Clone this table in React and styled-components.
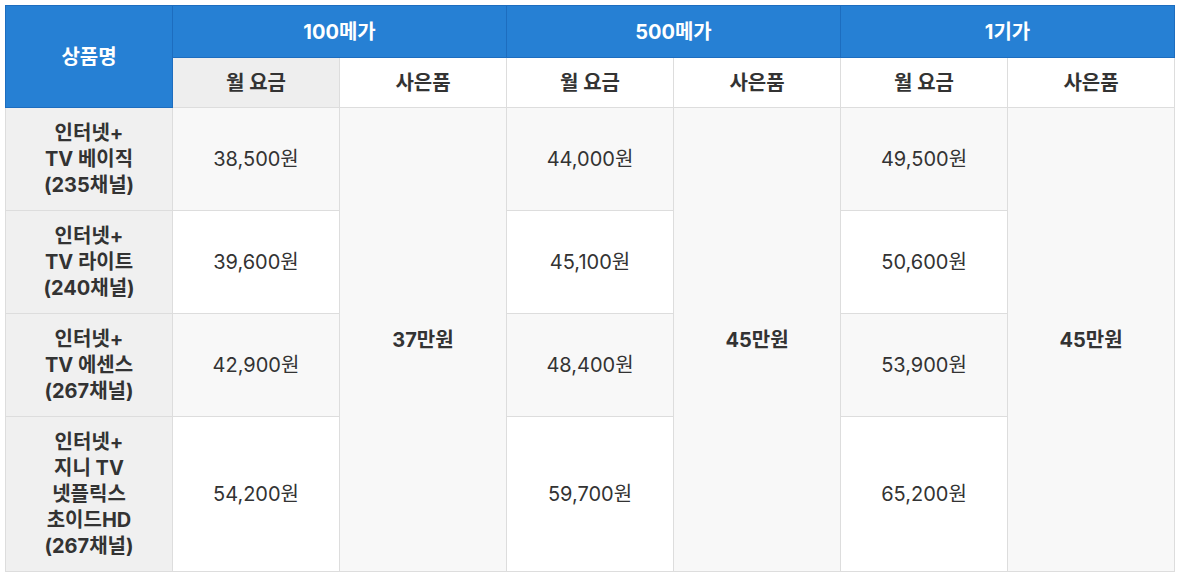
import React from "react";
import styled, { createGlobalStyle } from "styled-components";

const Global = createGlobalStyle`
  html, body { margin: 0; padding: 0; background: #fff; }
  body { font-family: Inter, "Noto Sans CJK KR", sans-serif; color: #333; }
`;

const Wrap = styled.div`
  padding: 5px;
`;

const Table = styled.table`
  width: 1170px;
  border-collapse: collapse;
  table-layout: fixed;
  font-size: 20px;
  line-height: 26px;
  text-align: center;
`;

const HeadCell = styled.th`
  background: #2680d4;
  color: #fff;
  font-weight: 700;
  border: 1px solid #1d6dbf;
  height: 51px;
  padding: 0;
`;

const SubHead = styled.th`
  background: ${(p) => (p.$gray ? "#eeeeee" : "#fff")};
  color: #333;
  font-weight: 700;
  border: 1px solid #dddddd;
  height: 49px;
  padding: 0;
`;

const NameCell = styled.td`
  background: #f0f0f0;
  font-weight: 700;
  border: 1px solid #dddddd;
  padding: 12px 4px;
  color: #333;
`;

const PriceCell = styled.td`
  background: ${(p) => (p.$alt ? "#f8f8f8" : "#fff")};
  border: 1px solid #dddddd;
  padding: 12px 4px;
  color: #333;
`;

const GiftCell = styled.td`
  background: #f8f8f8;
  border: 1px solid #dddddd;
  font-weight: 700;
  color: #333;
`;

const rows = [
  { name: ["인터넷+", "TV 베이직", "(235채널)"], p: ["38,500원", "44,000원", "49,500원"] },
  { name: ["인터넷+", "TV 라이트", "(240채널)"], p: ["39,600원", "45,100원", "50,600원"] },
  { name: ["인터넷+", "TV 에센스", "(267채널)"], p: ["42,900원", "48,400원", "53,900원"] },
  { name: ["인터넷+", "지니 TV", "넷플릭스", "초이드HD", "(267채널)"], p: ["54,200원", "59,700원", "65,200원"] },
];

const gifts = ["37만원", "45만원", "45만원"];

export default function App() {
  return (
    <Wrap>
      <Global />
      <Table>
        <colgroup>
          {Array.from({ length: 7 }).map((_, i) => (
            <col key={i} />
          ))}
        </colgroup>
        <thead>
          <tr>
            <HeadCell rowSpan={2}>상품명</HeadCell>
            <HeadCell colSpan={2}>100메가</HeadCell>
            <HeadCell colSpan={2}>500메가</HeadCell>
            <HeadCell colSpan={2}>1기가</HeadCell>
          </tr>
          <tr>
            <SubHead $gray>월 요금</SubHead>
            <SubHead>사은품</SubHead>
            <SubHead>월 요금</SubHead>
            <SubHead>사은품</SubHead>
            <SubHead>월 요금</SubHead>
            <SubHead>사은품</SubHead>
          </tr>
        </thead>
        <tbody>
          {rows.map((r, i) => (
            <tr key={i}>
              <NameCell>
                {r.name.map((l, j) => (
                  <div key={j}>{l}</div>
                ))}
              </NameCell>
              {r.p.map((price, k) => (
                <React.Fragment key={k}>
                  <PriceCell $alt={i % 2 === 0}>{price}</PriceCell>
                  {i === 0 && <GiftCell rowSpan={4}>{gifts[k]}</GiftCell>}
                </React.Fragment>
              ))}
            </tr>
          ))}
        </tbody>
      </Table>
    </Wrap>
  );
}
